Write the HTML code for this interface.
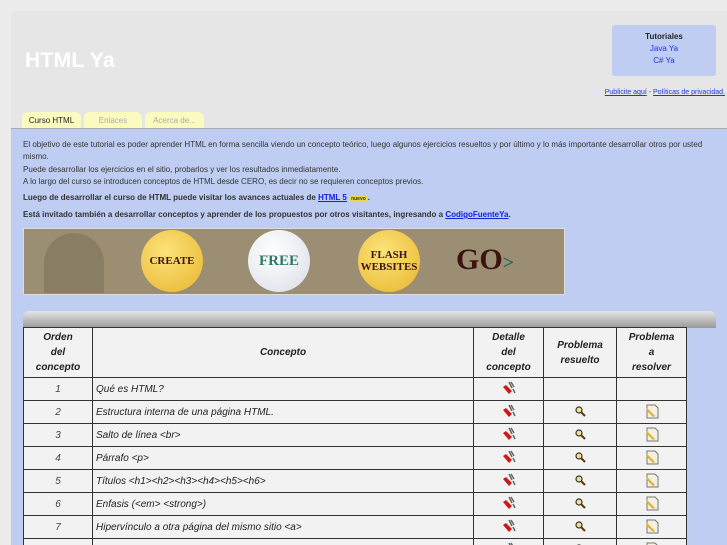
<!DOCTYPE html>
<html><head><meta charset="utf-8"><style>
*{margin:0;padding:0;box-sizing:border-box}
html,body{width:727px;height:545px;overflow:hidden}
body{background:#ececec;font-family:"Liberation Sans",sans-serif;position:relative}
#wrap{position:absolute;left:11px;top:11px;width:716px;height:534px;background:#e6e6e6;border-radius:6px 0 0 0;overflow:hidden}
#title{position:absolute;left:14px;top:38px;color:#fff;font-size:21px;font-weight:bold;letter-spacing:0.3px}
#tut{position:absolute;left:601px;top:14px;width:104px;height:51px;background:#bfcdf2;border-radius:3px;text-align:center;font-size:8px;line-height:12px;padding-top:6px}
#tut b{color:#222}
#tut span{color:#2233dd;display:block}
#pub{position:absolute;right:2px;top:78px;font-size:7px;color:#2233dd}
#pub u{color:#2233dd}
.tab{position:absolute;top:101px;height:16px;background:#fbfbc0;border-radius:6px 6px 0 0;font-size:8px;text-align:center;line-height:18px;color:#aaa}
#content{position:absolute;left:0;top:117px;width:716px;height:430px;background:#bfcdf2;border-top:1px solid #aaa}
.p{position:absolute;left:12px;font-size:8px;color:#333;line-height:12.3px}
a{color:#1122dd}
#banner{position:absolute;left:12px;top:99px;width:542px;height:67px;background:#9c8e72;border:1px solid #ddd}
.btn{position:absolute;top:1px;width:62px;height:62px;border-radius:50%;background:radial-gradient(circle at 40% 35%,#fde27a,#e7b62e);font-family:"Liberation Serif",serif;font-weight:bold;color:#3b1410;text-align:center;display:flex;align-items:center;justify-content:center;font-size:11px;line-height:12px}
#shadow{position:absolute;left:12px;top:182px;width:693px;height:17px;border-radius:6px 6px 0 0;background:linear-gradient(#e4e4e4,#9a9a9a)}
table{position:absolute;left:12px;top:198px;border-collapse:collapse;background:#f2f2f2;font-size:10px;font-style:italic;color:#222}
td,th{border:1px solid #333;height:23px}
th{font-weight:bold;font-style:italic;height:50px;line-height:15px}
td.n{text-align:center;color:#444}
td.c{padding-left:3px}
td.i{text-align:center}
</style></head><body>
<div id="wrap">
<div id="title">HTML Ya</div>
<div id="tut"><b>Tutoriales</b><span>Java Ya</span><span>C# Ya</span></div>
<div id="pub"><u>Publicite aquí</u> - <u>Políticas de privacidad.</u></div>
<div class="tab" style="left:11px;width:59px;color:#222">Curso HTML</div>
<div class="tab" style="left:73px;width:58px">Enlaces</div>
<div class="tab" style="left:134px;width:59px">Acerca de...</div>
<div id="content">
<div class="p" style="top:10px;width:700px">El objetivo de este tutorial es poder aprender HTML en forma sencilla viendo un concepto teórico, luego algunos ejercicios resueltos y por último y lo más importante desarrollar otros por usted mismo.<br>Puede desarrollar los ejercicios en el sitio, probarlos y ver los resultados inmediatamente.<br>A lo largo del curso se introducen conceptos de HTML desde CERO, es decir no se requieren conceptos previos.</div>
<div class="p" style="top:63px;font-weight:bold">Luego de desarrollar el curso de HTML puede visitar los avances actuales de <a href="#"><u>HTML 5</u></a> <span style="background:#e8d84a;border-radius:4px;font-size:5px;padding:0 2px">nuevo</span>.</div>
<div class="p" style="top:80px;font-weight:bold">Está invitado también a desarrollar conceptos y aprender de los propuestos por otros visitantes, ingresando a <a href="#"><u>CodigoFuenteYa</u></a>.</div>
<div id="banner">
<div style="position:absolute;left:20px;top:4px;width:60px;height:60px;background:#6e6350;border-radius:30px 30px 0 0;opacity:.4"></div>
<div class="btn" style="left:117px">CREATE</div>
<div class="btn" style="left:224px;background:radial-gradient(circle at 40% 35%,#fff,#d8dde6);color:#2a7a68;font-size:15px">FREE</div>
<div class="btn" style="left:334px">FLASH<br>WEBSITES</div>
<div style="position:absolute;left:432px;top:14px;font:bold 30px 'Liberation Serif',serif;color:#3b1410">GO<span style="color:#2a6a58;font-size:20px">&gt;</span></div>
</div>
<div id="shadow"></div>
<table>
<tr><th style="width:69px">Orden<br>del<br>concepto</th><th style="width:381px">Concepto</th><th style="width:70px">Detalle<br>del<br>concepto</th><th style="width:73px">Problema<br>resuelto</th><th style="width:70px">Problema<br>a<br>resolver</th></tr>
<tr><td class="n">1</td><td class="c">Qué es HTML?</td><td class="i">D</td><td></td><td></td></tr>
<tr><td class="n">2</td><td class="c">Estructura interna de una página HTML.</td><td class="i">D</td><td class="i">L</td><td class="i">P</td></tr>
<tr><td class="n">3</td><td class="c">Salto de línea &lt;br&gt;</td><td class="i">D</td><td class="i">L</td><td class="i">P</td></tr>
<tr><td class="n">4</td><td class="c">Párrafo &lt;p&gt;</td><td class="i">D</td><td class="i">L</td><td class="i">P</td></tr>
<tr><td class="n">5</td><td class="c">Títulos &lt;h1&gt;&lt;h2&gt;&lt;h3&gt;&lt;h4&gt;&lt;h5&gt;&lt;h6&gt;</td><td class="i">D</td><td class="i">L</td><td class="i">P</td></tr>
<tr><td class="n">6</td><td class="c">Enfasis (&lt;em&gt; &lt;strong&gt;)</td><td class="i">D</td><td class="i">L</td><td class="i">P</td></tr>
<tr><td class="n">7</td><td class="c">Hipervínculo a otra página del mismo sitio &lt;a&gt;</td><td class="i">D</td><td class="i">L</td><td class="i">P</td></tr>
<tr><td class="n">8</td><td class="c"></td><td class="i">D</td><td class="i">L</td><td class="i">P</td></tr>
</table>
</div>
</div>
<script>
var D='<svg width="16" height="16" viewBox="0 0 16 16"><path d="M2 7l6 7 3-3-6-6z" fill="#d01818"/><path d="M8 2l3 6M10 2l3 5M12 9l2 4" stroke="#666" stroke-width="1.5" fill="none"/></svg>';
var L='<svg width="12" height="12" viewBox="0 0 12 12"><circle cx="5" cy="5" r="3" fill="#f4e08a" stroke="#333" stroke-width="1.2"/><path d="M7 7l4 4" stroke="#5a3a10" stroke-width="2"/></svg>';
var P='<svg width="16" height="16" viewBox="0 0 16 16"><path d="M3 2h8l3 3v10H3z" fill="#f4f0e0" stroke="#777"/><path d="M3 5l8 8-2 1-7-7z" fill="#e0b030"/></svg>';
document.querySelectorAll('td.i').forEach(function(t){var s=t.textContent;t.innerHTML=s=='D'?D:s=='L'?L:P;});
</script>
</body></html>
